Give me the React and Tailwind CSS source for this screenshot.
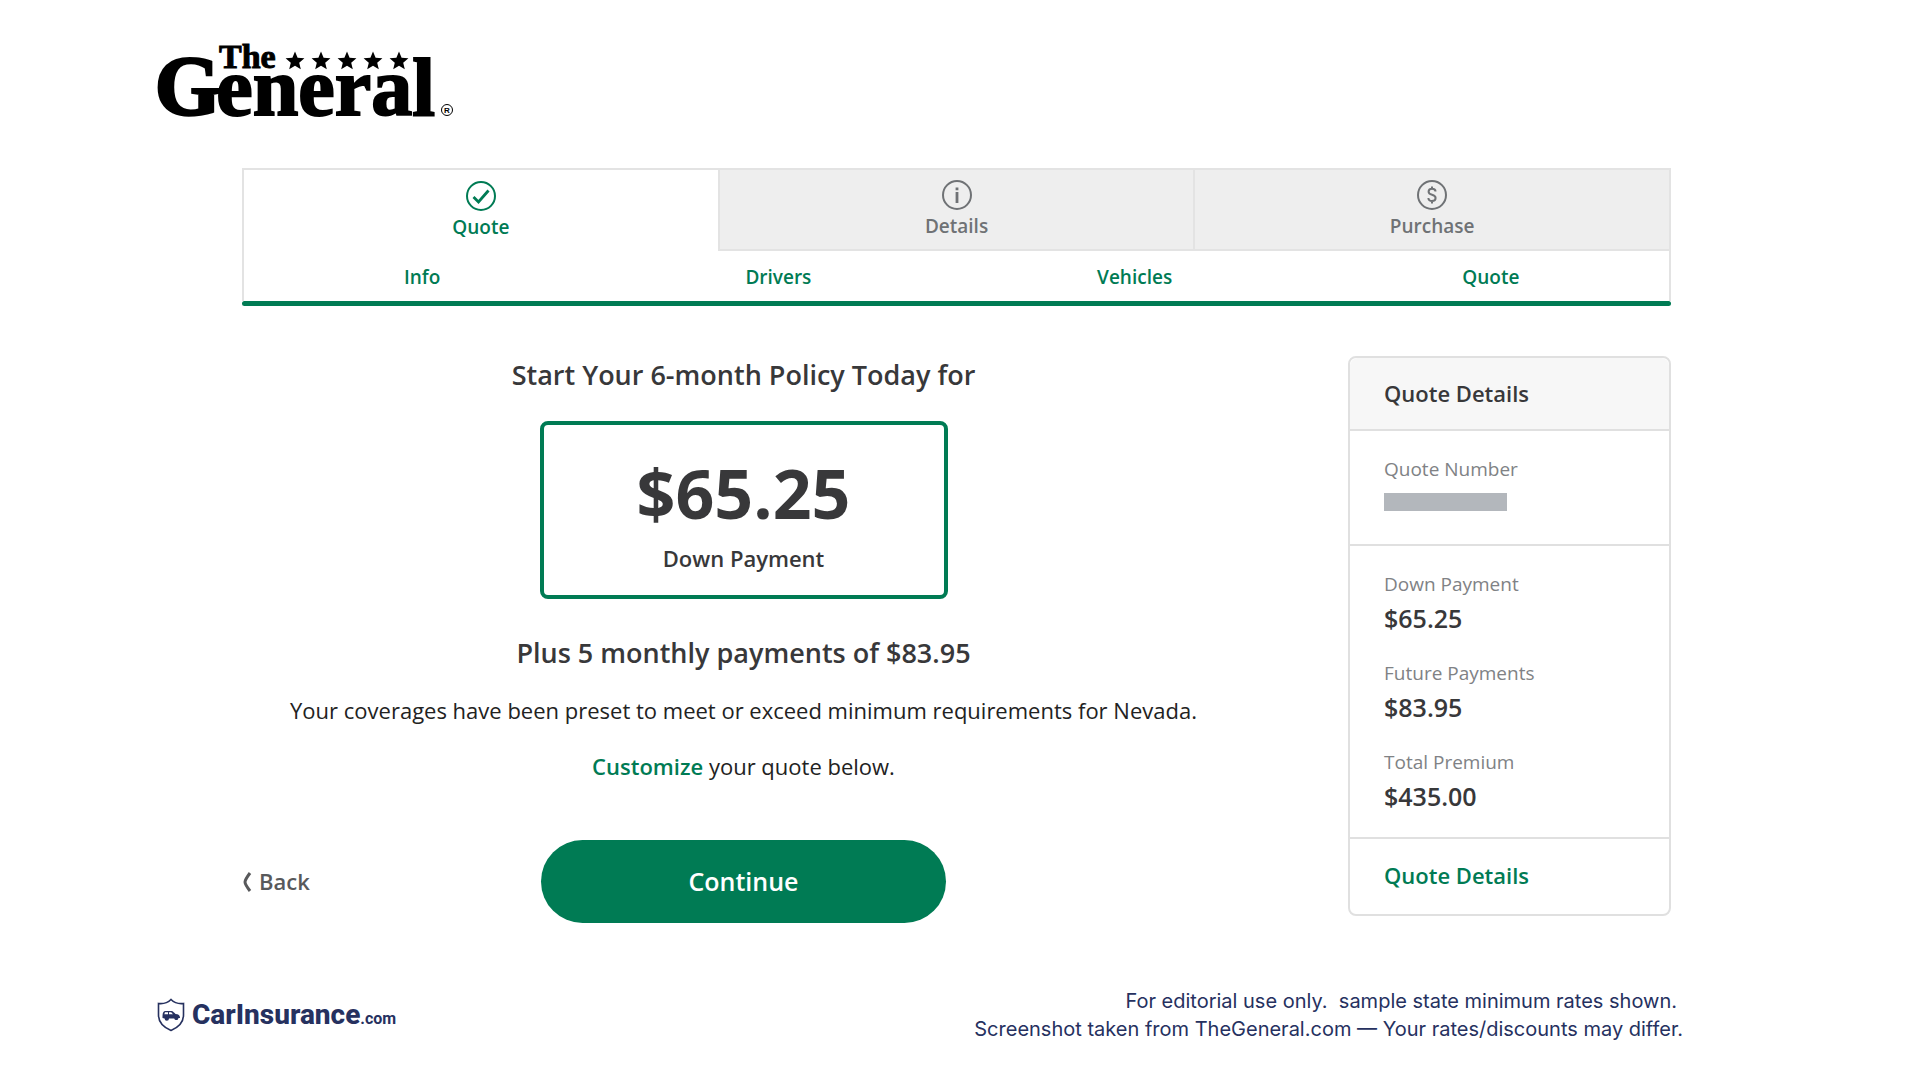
import React from 'react'

const tabs = [
  { label: 'Quote', icon: 'check', active: true },
  { label: 'Details', icon: 'info' },
  { label: 'Purchase', icon: 'dollar' },
]

const steps = ['Info', 'Drivers', 'Vehicles', 'Quote']

const amounts = [
  { label: 'Down Payment', value: '$65.25' },
  { label: 'Future Payments', value: '$83.95' },
  { label: 'Total Premium', value: '$435.00' },
]

const Star = ({ x }) => (
  <path
    transform={`translate(${x} 52)`}
    d="M0 -9.5 L2.6 -3.2 L9.4 -2.7 L4.2 1.7 L5.8 8.3 L0 4.8 L-5.8 8.3 L-4.2 1.7 L-9.4 -2.7 L-2.6 -3.2 Z"
  />
)

const GeneralLogo = () => (
  <svg
    viewBox="-6 0 316 106"
    className="block h-[106px] w-[316px] font-['Liberation_Serif',serif] font-bold"
    role="img"
    aria-label="The General"
  >
    <text x="62" y="32" fontSize="34" stroke="#000" strokeWidth="1">The</text>
    <text x="-2" y="79" fontSize="84" stroke="#000" strokeWidth="3">
      G<tspan dx="-4" fontSize="82" strokeWidth="2">eneral</tspan>
    </text>
    <g transform="translate(-2 -27)">
      <Star x={140} />
      <Star x={166} />
      <Star x={192} />
      <Star x={218} />
      <Star x={244} />
    </g>
    <circle cx="290" cy="74" r="5.5" fill="none" stroke="#000" />
    <text x="290" y="77" fontSize="8" textAnchor="middle" className="font-['Liberation_Sans',sans-serif]">R</text>
  </svg>
)

const TabIcon = ({ name }) => (
  <svg viewBox="0 0 32 32" className="h-8 w-8" fill="none" stroke="currentColor" strokeWidth="2" aria-hidden="true">
    <circle cx="16" cy="16" r="14" />
    {name === 'check' && <path d="M8.5 17 L13.5 22 L23.5 10.5" strokeWidth="2.8" />}
    {name === 'info' && <path d="M16 13 V24 M16 8.5 V11.3" strokeWidth="2.8" />}
    {name === 'dollar' && (
      <path d="M19.5 12.5 C19.5 10.5 18 9.8 16 9.8 C14 9.8 12.6 10.9 12.6 12.7 C12.6 17 19.6 14.6 19.6 19 C19.6 21 18 22 16 22 C13.8 22 12.4 21 12.4 19 M16 7.5 V10 M16 22 V24.5" />
    )}
  </svg>
)

const CarInsuranceLogo = () => (
  <a href="#" className="flex items-center gap-[7px] font-['Roboto',sans-serif] text-[#26315f]">
    <svg viewBox="0 0 28 34" className="h-[34px] w-7" aria-hidden="true">
      <path
        d="M14 1.5 C11 4.5 6 6 1.5 5.5 V17 C1.5 25 7 29.5 14 32.5 C21 29.5 26.5 25 26.5 17 V5.5 C22 6 17 4.5 14 1.5 Z"
        fill="none"
        stroke="currentColor"
        strokeWidth="1.6"
      />
      <path
        d="M5.5 18 C5.5 14.5 6.5 13 8.5 13 H14.5 C16 13 17.5 15 18.5 16 C21.5 16.2 23 17 23 20 H21.5 A2.2 2.2 0 0 1 17.2 20.5 H12 A2.2 2.2 0 0 1 7.6 20.5 L5.5 20 Z"
        fill="currentColor"
      />
      <path d="M8 14.3 H11 V16.3 H7.3 Z M12 14.3 H14.2 L16 16.3 H12 Z" fill="#fff" />
      <circle cx="9.8" cy="20.5" r="1.4" fill="currentColor" />
      <circle cx="19.4" cy="20.5" r="1.4" fill="currentColor" />
    </svg>
    <span className="text-[28px] leading-8 font-extrabold">
      CarInsurance<span className="text-base font-bold">.com</span>
    </span>
  </a>
)

const QuoteNav = () => (
  <nav className="border-x-2 border-t-2 border-[#e3e3e3] font-semibold">
    <div className="flex h-[81px]">
      {tabs.map((tab) => (
        <button
          key={tab.label}
          className={
            tab.active
              ? 'flex flex-1 flex-col items-center gap-px pt-2.5 text-[19px] leading-7 text-[#007b54]'
              : 'flex flex-1 flex-col items-center gap-px border-b-2 border-l-2 border-[#e3e3e3] bg-[#eeeeee] pt-[9px] text-[19px] leading-7 text-[#6f7275]'
          }
        >
          <TabIcon name={tab.icon} />
          {tab.label}
        </button>
      ))}
    </div>
    <div className="flex h-[50px] items-center pt-0.5 text-center text-[19px] text-[#007b54]">
      {steps.map((step) => (
        <a key={step} href="#" className="flex-1">{step}</a>
      ))}
    </div>
  </nav>
)

const QuoteSummary = () => (
  <aside className="w-[323px] shrink-0 self-start divide-y-2 divide-[#e0e0e0] rounded-lg border-2 border-[#e0e0e0] text-[#38383a]">
    <h2 className="rounded-t-lg bg-[#f7f7f7] px-[34px] pt-[19px] pb-5 text-[22px] leading-8 font-semibold">Quote Details</h2>
    <div className="h-[115px] px-[34px] pt-6">
      <p className="text-[19px] leading-7 text-[#808285]">Quote Number</p>
      <div className="mt-2.5 h-[18px] w-[123px] bg-[#b3b7bc]" />
    </div>
    <dl className="flex flex-col gap-[21px] px-[34px] pt-[22px] pb-[23px]">
      {amounts.map((item) => (
        <div key={item.label}>
          <dt className="text-[19px] leading-8 text-[#808285]">{item.label}</dt>
          <dd className="text-[25px] leading-9 font-semibold">{item.value}</dd>
        </div>
      ))}
    </dl>
    <a href="#" className="block px-[34px] pt-5 pb-[23px] text-[22px] leading-8 font-semibold text-[#007b54]">
      Quote Details
    </a>
  </aside>
)

const App = () => {
  return (
    <div className="min-h-screen bg-white font-['Open_Sans',sans-serif]">
      <header className="px-[151px] pt-9">
        <GeneralLogo />
      </header>

      <main className="pt-[26px] pr-[249px] pl-[242px]">
        <QuoteNav />
        <div className="h-[5px] rounded-full bg-[#007b54]" />

        <div className="mt-[50px] flex gap-[103px]">
          <section className="flex flex-1 flex-col items-center text-center text-[#38383a]">
            <h1 className="text-[27px] leading-[38px] font-semibold">Start Your 6-month Policy Today for</h1>
            <div className="mt-[27px] flex h-[178px] w-[408px] flex-col items-center rounded-lg border-4 border-[#007b54] pt-[26px]">
              <p className="text-[68px] leading-[84px] font-bold">$65.25</p>
              <p className="mt-[5px] text-[22px] leading-9 font-semibold">Down Payment</p>
            </div>
            <p className="mt-[35px] text-[27px] leading-[38px] font-semibold">Plus 5 monthly payments of $83.95</p>
            <p className="mt-5 text-[22px] leading-9 text-[#222222]">
              Your coverages have been preset to meet or exceed minimum requirements for Nevada.
            </p>
            <p className="mt-5 text-[22px] leading-9 text-[#222222]">
              <a href="#" className="font-semibold text-[#007b54]">Customize</a> your quote below.
            </p>

            <div className="mt-14 grid w-full grid-cols-[1fr_auto_1fr] items-center">
              <a href="#" className="flex items-center gap-[7px] text-[22px] font-semibold text-[#58595b]">
                <svg viewBox="0 0 10 20" className="h-5 w-[10px]" fill="none" stroke="currentColor" strokeWidth="3" aria-hidden="true">
                  <path d="M8 1 C5 5 3 8 3 10 C3 12 5 15 8 19" />
                </svg>
                Back
              </a>
              <button className="h-[83px] w-[405px] rounded-full bg-[#007b54] text-[25px] font-semibold text-white">
                Continue
              </button>
            </div>
          </section>
          <QuoteSummary />
        </div>
      </main>

      <footer className="flex items-center justify-between pt-[64px] pr-[237px] pl-[157px]">
        <CarInsuranceLogo />
        <p className="text-right font-['Inter',sans-serif] text-xl leading-7 text-[#26315f]">
          <span className="mr-[6px]">For editorial use only.&nbsp; sample state minimum rates shown.</span>
          <br />
          Screenshot taken from TheGeneral.com — Your rates/discounts may differ.
        </p>
      </footer>
    </div>
  )
}

export default App
